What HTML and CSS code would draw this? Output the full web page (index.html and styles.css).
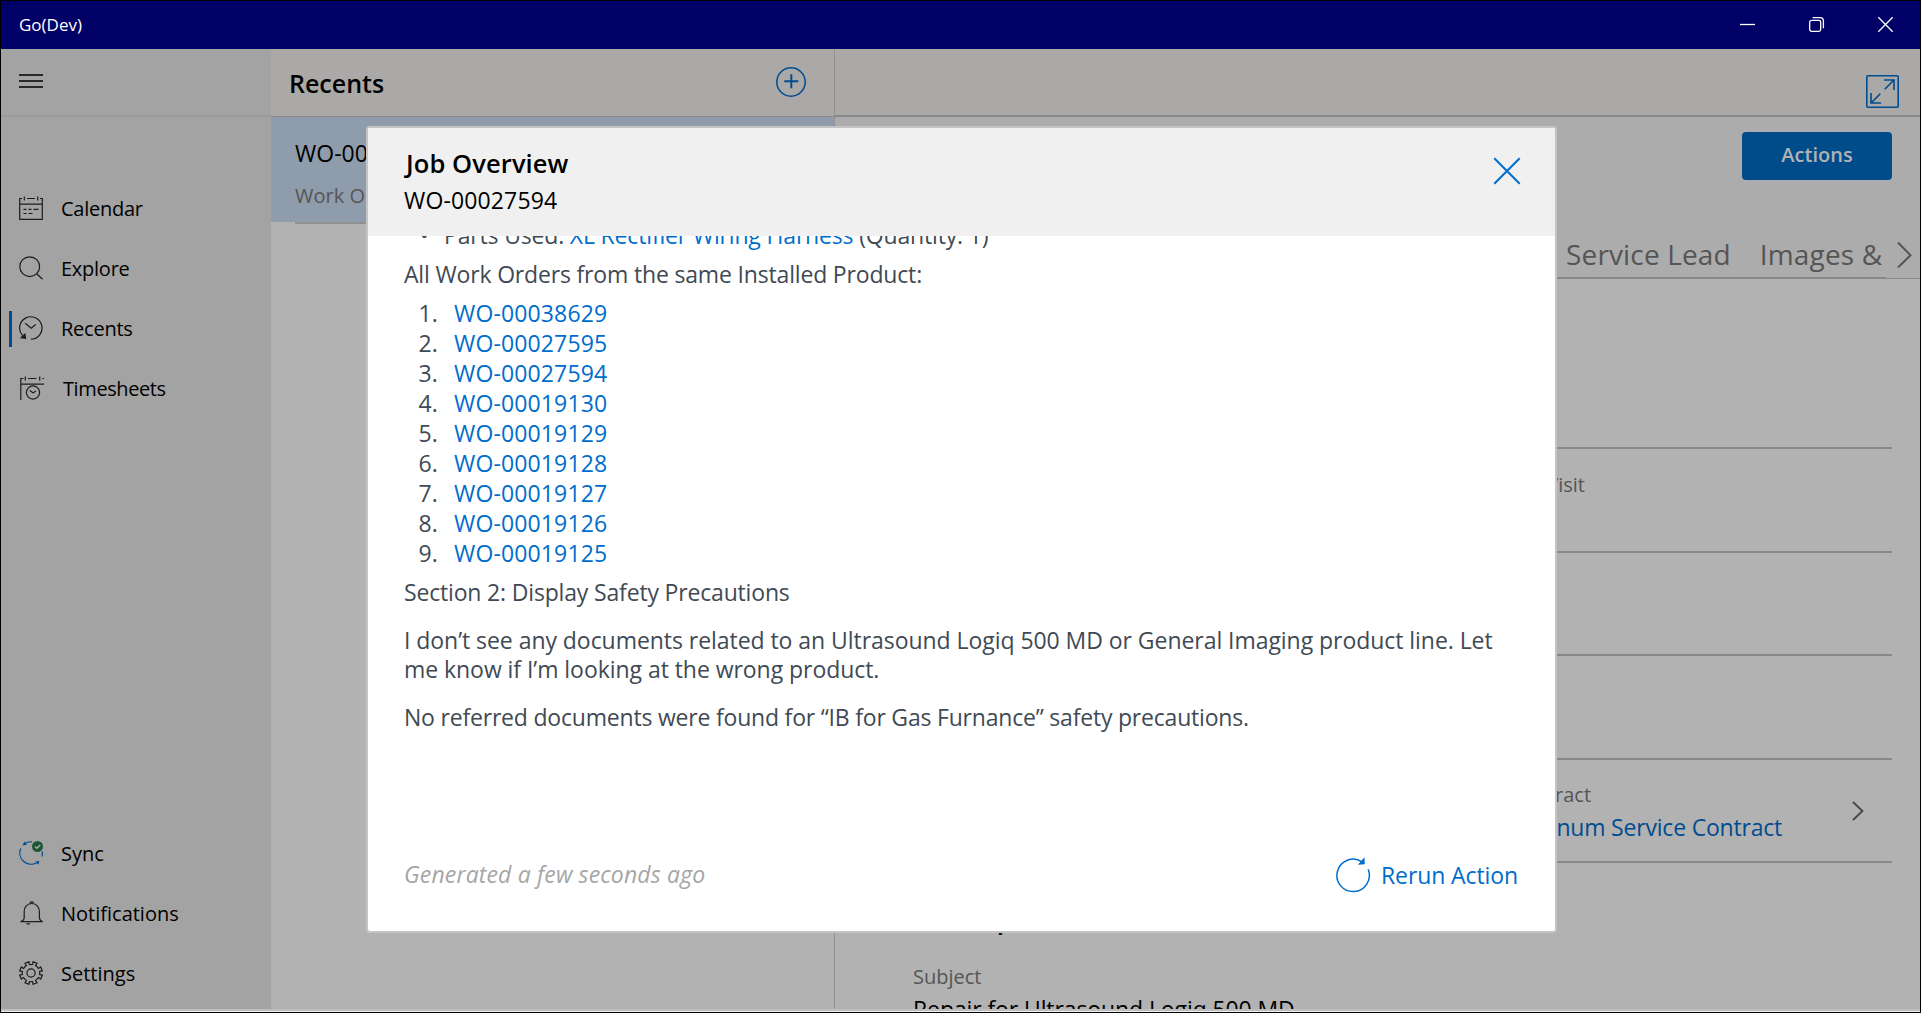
FILE: index.html
```html
<!DOCTYPE html>
<html lang="en">
  <head>
    <meta charset="UTF-8" />
    <meta name="viewport" content="width=device-width, initial-scale=1.0" />
    <title>Go(Dev)</title>
    <link rel="stylesheet" href="styles.css">
  </head>

  <body>
    <div id="window">
      <header id="titlebar">
        <span class="app-name">Go(Dev)</span>
        <div class="window-btns">
          <svg width="17" height="17" viewBox="0 0 17 17"><path d="M1 8.5h15" /></svg>
          <svg width="17" height="17" viewBox="0 0 17 17">
            <rect x="1.7" y="4.4" width="11" height="11" rx="1.8" />
            <path d="M4.6 1.6H12a3.4 3.4 0 0 1 3.4 3.4v7.2" />
          </svg>
          <svg width="17" height="17" viewBox="0 0 17 17"><path d="M1.3 1.3l14.4 14.4M15.7 1.3L1.3 15.7" /></svg>
        </div>
      </header>

      <div id="main">
        <nav id="sidebar">
          <div class="menu-toggle">
            <svg width="24" height="16" viewBox="0 0 24 16"><path d="M0 2h24M0 8h24M0 14h24" /></svg>
          </div>
          <ul class="nav-list">
            <li class="nav-item">
              <svg class="icon" viewBox="0 0 24 24">
                <path d="M3 2.5H.7v20.8h22.6V2.5H21M8 2.5h8M.7 8.2h22.6M5.3.5v4M18.7.5v4" />
                <path d="M4.5 13.3h3M9.5 13.3h3M14.5 13.3h5M4.5 17.5h3M9.5 17.5h4" />
              </svg>
              <span>Calendar</span>
            </li>
            <li class="nav-item">
              <svg class="icon" viewBox="0 0 24 24">
                <circle cx="10.7" cy="10.7" r="9.9" />
                <path d="M17.7 17.7l5.8 5.6" />
              </svg>
              <span>Explore</span>
            </li>
            <li class="nav-item active">
              <svg class="icon" viewBox="0 0 24 24">
                <path d="M3.5 19.5A11.2 11.2 0 1 1 12 23.2" />
                <path d="M6.2 7.2l6 5 4.5-3.7" />
                <path class="fill" d="M2 21.7l4.5.5-.6-4z" />
              </svg>
              <span>Recents</span>
            </li>
            <li class="nav-item timesheets">
              <svg class="icon" viewBox="0 0 24 24">
                <path d="M3.5 2.5H.8V24M8 2.5h8.5M.8 8.2H24M5.3.5v4M19.7.5v4M22.5 2.5H24" />
                <circle cx="13" cy="16.5" r="6.6" />
                <path d="M9.8 14.5l3.2 2.4 3-1.8" />
              </svg>
              <span>Timesheets</span>
            </li>
          </ul>
          <ul class="nav-list nav-bottom">
            <li class="nav-item">
              <svg class="icon" viewBox="0 0 24 24">
                <g class="sync">
                  <path d="M1.8 7.5A11.2 11.2 0 0 0 17.5 21.8M13 .8A11.2 11.2 0 0 0 6 2.4M22.8 15.5a11.2 11.2 0 0 0 .5-5" />
                  <path class="fill-blue" d="M3.5 4.2l4.3-.3-2.3-3.5zM20.5 20l-4.2.5 2.8 3.2z" />
                </g>
                <circle class="badge" cx="18.5" cy="5.5" r="5.5" />
                <path class="tick" d="M16 5.5l1.8 1.8 3.4-3.3" />
              </svg>
              <span>Sync</span>
            </li>
            <li class="nav-item">
              <svg class="icon" viewBox="0 0 24 24">
                <path d="M1.5 20.7h22.2c-2.5-.7-3.2-2-3.3-4.2V10.5c0-4.3-3-8-7.6-8s-7.6 3.7-7.6 8v6c0 2.2-.8 3.5-3.7 4.2z" />
                <path d="M11 2.6a1.8 1.8 0 0 1 3.6 0M7.500 22.3c.6 1 2.8 1 3.4 0" />
              </svg>
              <span>Notifications</span>
            </li>
            <li class="nav-item">
              <svg class="icon" viewBox="0 0 24 24">
                <circle cx="12" cy="12" r="4.1" />
                <path d="M9.9.7l.5 2.7a8.8 8.8 0 0 0 3.2 0l.5-2.700 3.9 1.6-1.5 2.3a8.800 8.800 0 0 1 2.9 2.9l2.3-1.5 1.6 3.9-2.7.5a8.800 8.800 0 0 1 0 3.2l2.7.5-1.6 3.9-2.3-1.5a8.800 8.800 0 0 1-2.9 2.9l1.5 2.3-3.9 1.6-.5-2.7a8.800 8.800 0 0 1-3.2 0l-.5 2.7L6 21.7l1.5-2.3a8.800 8.800 0 0 1-2.9-2.9L2.3 18 .7 14.1l2.7-.5a8.800 8.800 0 0 1 0-3.2L.7 9.9 2.3 6l2.3 1.5a8.800 8.800 0 0 1 2.9-2.9L6 2.3z" />
              </svg>
              <span>Settings</span>
            </li>
          </ul>
        </nav>

        <section id="recents">
          <div class="recents-head">
            <h2>Recents</h2>
            <svg class="add" width="30" height="30" viewBox="0 0 30 30">
              <circle cx="15" cy="15" r="14.2" />
              <path d="M15.3 7.3v14M8.3 14.2h14" />
            </svg>
          </div>
          <div class="recent-item">
            <p class="recent-name">WO-00027594</p>
            <p class="recent-type">Work Order</p>
          </div>
        </section>

        <section id="detail">
          <div class="detail-head">
            <svg width="33" height="33" viewBox="0 0 33 33">
              <rect x=".8" y=".8" width="31.4" height="31.4" rx="1" />
              <path d="M18.7 14.3l9-9M18 5h10v10M14.3 18.7l-9 9M5 18v10h10" />
            </svg>
          </div>
          <div class="detail-top">
            <button class="btn-actions">Actions</button>
            <div class="tabs">
              <div class="tab-names">
                <span>Service Lead</span>
                <span>Images &amp; Documents</span>
              </div>
              <div class="tab-next">
                <svg width="15" height="28" viewBox="0 0 15 28"><path d="M1 1.5l12.5 12.7L1 26.5" /></svg>
              </div>
            </div>
          </div>
          <div class="fields">
            <div class="field-row first"></div>
            <div class="field-row">
              <div class="field">
                <p class="label">PM Visit</p>
              </div>
            </div>
            <div class="field-row short"></div>
            <div class="field-row"></div>
            <div class="field-row short">
              <div class="field">
                <p class="label">Contract</p>
                <p class="value link">Platinum Service Contract</p>
              </div>
              <svg class="chevron" width="12" height="20" viewBox="0 0 12 20"><path d="M1 1l9.500 9L1 19" /></svg>
            </div>
            <h3>Description</h3>
            <p class="label">Subject</p>
            <p class="value">Repair for Ultrasound Logiq 500 MD</p>
          </div>
        </section>
      </div>
      <div id="bottom-edge"></div>

      <div id="modal">
        <div class="modal-head">
          <div>
            <h1>Job Overview</h1>
            <p>WO-00027594</p>
          </div>
          <svg width="28" height="28" viewBox="0 0 28 28"><path d="M1.3 1.3l25.4 25.4M26.7 1.3L1.3 26.7" /></svg>
        </div>
        <div class="modal-body">
          <ul>
            <li>Parts Used: <a>XL Rectifier Wiring Harness</a> (Quantity: 1)</li>
          </ul>
          <p>All Work Orders from the same Installed Product:</p>
          <ol>
            <li><a>WO-00038629</a></li>
            <li><a>WO-00027595</a></li>
            <li><a>WO-00027594</a></li>
            <li><a>WO-00019130</a></li>
            <li><a>WO-00019129</a></li>
            <li><a>WO-00019128</a></li>
            <li><a>WO-00019127</a></li>
            <li><a>WO-00019126</a></li>
            <li><a>WO-00019125</a></li>
          </ol>
          <p>Section 2: Display Safety Precautions</p>
          <p class="wide">I don’t see any documents related to an Ultrasound Logiq 500 MD or General Imaging product line. Let me know if I’m looking at the wrong product.</p>
          <p>No referred documents were found for “IB for Gas Furnance” safety precautions.</p>
        </div>
        <div class="modal-foot">
          <span class="generated">Generated a few seconds ago</span>
          <a class="rerun">
            <svg width="36" height="36" viewBox="0 0 36 36">
              <path d="M33.2 12.4A16.2 16.2 0 1 1 27 4.8" />
              <path class="arrow" d="M28.8 2.2l.2 4.300-4.300.3z" />
            </svg>
            Rerun Action
          </a>
        </div>
      </div>
    </div>
  </body>
</html>
```
FILE: styles.css
```css
* {
  box-sizing: border-box;
}

body,
h1,
h2,
h3,
p,
ul,
ol {
  margin: 0;
  padding: 0;
}

body {
  height: 100vh;
  overflow: hidden;
  font-family: "Open Sans", "Noto Sans", sans-serif;
  font-size: 23px;
  color: #000;
}

ul,
ol {
  list-style: none;
}

svg {
  display: block;
  flex: none;
  fill: none;
}

#window {
  position: relative;
  display: flex;
  flex-direction: column;
  height: 100vh;
  border: 1px solid #000;
}

#titlebar {
  display: flex;
  justify-content: space-between;
  align-items: center;
  height: 48px;
  padding: 0 26px 1px 18px;
  background-color: #000066;
  color: #fff;
}

.app-name {
  font-size: 17px;
}

.window-btns {
  display: flex;
  gap: 52px;
}

.window-btns svg {
  stroke: #fff;
  stroke-width: 1.3;
}

#main {
  display: flex;
  flex: 1;
  min-height: 0;
}

/* sidebar */

#sidebar {
  display: flex;
  flex-direction: column;
  width: 270px;
  padding-bottom: 6px;
  background-color: #a3a3a3;
}

.menu-toggle {
  height: 68px;
  padding: 24px 0 0 18px;
  border-bottom: 2px solid #999;
}

.menu-toggle svg {
  stroke: #000;
  stroke-width: 1.3;
}

.nav-list {
  margin-top: 61px;
}

.nav-bottom {
  margin-top: auto;
}

.nav-item {
  display: flex;
  align-items: center;
  gap: 18px;
  height: 60px;
  padding-left: 18px;
  font-size: 20px;
  letter-spacing: -0.25px;
}

.nav-bottom .nav-item {
  letter-spacing: 0;
}

.nav-item.active {
  background: linear-gradient(#004c8f, #004c8f) 8px 13px / 3px 36px no-repeat;
}

.nav-item.timesheets {
  padding-left: 19px;
  gap: 19px;
  letter-spacing: -0.4px;
}

.icon {
  width: 24px;
  height: 24px;
  stroke: #1c1c1c;
  stroke-width: 1.2;
}

.icon .fill {
  fill: #1c1c1c;
}

.icon .sync {
  stroke: #004c8f;
}

.icon .fill-blue {
  fill: #004c8f;
  stroke: none;
}

.icon .badge {
  fill: #1f5637;
  stroke: none;
}

.icon .tick {
  stroke: #b2b2b2;
}

/* recents list */

#recents {
  width: 564px;
  background-color: #b2b2b2;
  border-right: 1px solid #919191;
}

.recents-head {
  display: flex;
  justify-content: space-between;
  align-items: center;
  height: 68px;
  padding: 0 28px 0 18px;
  background-color: #aba9a7;
  border-bottom: 1px solid #888;
}

.recents-head h2 {
  font-size: 25px;
  font-weight: 600;
}

.add {
  margin-bottom: 2px;
  stroke: #004c8f;
  stroke-width: 1.5;
}

.add path {
  stroke-width: 2;
}

.recent-item {
  height: 105px;
  padding: 16px 0 0 24px;
  background-color: #8f9cac;
}

.recent-item::after {
  content: "";
  display: block;
  height: 2px;
  margin-top: 4px;
  background-color: #919191;
}

.recent-name {
  line-height: 40px;
}

.recent-type {
  line-height: 45px;
  font-size: 20px;
  color: #555;
}

/* record detail */

#detail {
  flex: 1;
  min-width: 0;
  overflow: hidden;
  background-color: #b2b2b2;
}

.detail-head {
  display: flex;
  justify-content: flex-end;
  height: 68px;
  padding: 26px 21px 0 0;
  background-color: #aba9a7;
  border-bottom: 2px solid #888;
}

.detail-head svg {
  stroke: #004c8f;
  stroke-width: 1.6;
}

.detail-top {
  display: flex;
  flex-direction: column;
  height: 162px;
  padding-top: 15px;
  background-color: #acacac;
}

.btn-actions {
  flex: none;
  align-self: flex-end;
  width: 150px;
  height: 48px;
  margin-right: 28px;
  padding: 0 0 3px;
  border: 0;
  border-radius: 4px;
  background-color: #004c8b;
  color: #b2b2b2;
  font-family: inherit;
  font-size: 20px;
  font-weight: 600;
}

.tabs {
  display: flex;
  height: 50px;
  margin-top: 49px;
}

.tab-names {
  display: flex;
  gap: 29px;
  width: 1051px;
  padding-left: 731px;
  overflow: hidden;
  white-space: nowrap;
  border-bottom: 2px solid #888;
  font-size: 28px;
  line-height: 50px;
  letter-spacing: 0.15px;
  color: #555;
}

.tab-next {
  flex: 1;
  padding: 12px 0 0 11px;
  border-bottom: 1px solid #888;
}

.tab-next svg {
  stroke: #555;
  stroke-width: 2;
}

.fields {
  padding: 0 28px 0 78px;
}

.field-row {
  display: flex;
  height: 104px;
  padding: 22px 28px 0 598px;
  border-bottom: 2px solid #888;
}

.field-row.short {
  height: 103px;
  padding-top: 21px;
}

.field-row.first {
  height: 170px;
}

.field {
  flex: 1;
}

.label {
  font-size: 20px;
  line-height: 28px;
  color: #555;
}

.value {
  line-height: 37px;
  letter-spacing: -0.1px;
  white-space: nowrap;
}

.value.link {
  letter-spacing: -0.2px;
  color: #004c8f;
}

.chevron {
  margin-top: 20px;
  stroke: #444;
  stroke-width: 1.8;
}

.fields h3 {
  margin: 34px 0 26px;
  font-size: 28px;
  line-height: 40px;
  font-weight: 600;
  letter-spacing: -0.1px;
  color: #001a28;
}

#bottom-edge {
  height: 3px;
  background-color: #bebebe;
  border-bottom: 1px solid #eee;
}

/* job overview dialog */

#modal {
  position: absolute;
  top: 125px;
  left: 365px;
  display: flex;
  flex-direction: column;
  width: 1191px;
  height: 807px;
  background-color: #fff;
  border: 2px solid #c4c4c4;
  border-radius: 4px;
  overflow: hidden;
}

.modal-head {
  display: flex;
  justify-content: space-between;
  height: 108px;
  padding: 16px 34px 0 36px;
  background-color: #f0f0f0;
}

.modal-head h1 {
  padding-left: 2px;
  font-size: 25.5px;
  font-weight: 600;
  line-height: 38px;
  letter-spacing: 0.1px;
}

.modal-head p {
  line-height: 36px;
  letter-spacing: 0.14px;
}

.modal-head svg {
  margin-top: 13px;
  stroke: #006dcc;
  stroke-width: 2;
}

.modal-body {
  flex: 1;
  min-height: 0;
  padding: 0 36px;
  overflow: hidden;
  line-height: 29px;
  letter-spacing: -0.17px;
  color: #3f4a54;
}

.modal-body ul {
  margin: -16px 0 10px;
}

.modal-body ul li,
.modal-body ol li {
  line-height: 30px;
}

.modal-body ul li::before {
  content: "•";
  display: inline-block;
  width: 24px;
  padding-left: 16px;
}

.modal-body p {
  margin-bottom: 19px;
}

.modal-body .wide {
  letter-spacing: -0.05px;
}

.modal-body p:last-child {
  letter-spacing: -0.2px;
}

.modal-body ol {
  margin: -10px 0 10px;
  counter-reset: order;
}

.modal-body ol li {
  counter-increment: order;
  letter-spacing: 0.14px;
}

.modal-body ol li::before {
  content: counter(order) ".";
  display: inline-block;
  width: 34px;
  margin-right: 16px;
  text-align: right;
}

.modal-body a,
.rerun {
  color: #006dcc;
}

.modal-foot {
  display: flex;
  justify-content: space-between;
  align-items: center;
  height: 114px;
  padding: 0 37px 0 36px;
}

.generated {
  font-style: italic;
  letter-spacing: 0.15px;
  color: #a6a6a6;
}

.rerun {
  display: flex;
  align-items: center;
  gap: 10px;
  padding-top: 2px;
  letter-spacing: -0.1px;
}

.rerun svg {
  stroke: #006dcc;
  stroke-width: 1.5;
}

.rerun .arrow {
  fill: #006dcc;
}
```
